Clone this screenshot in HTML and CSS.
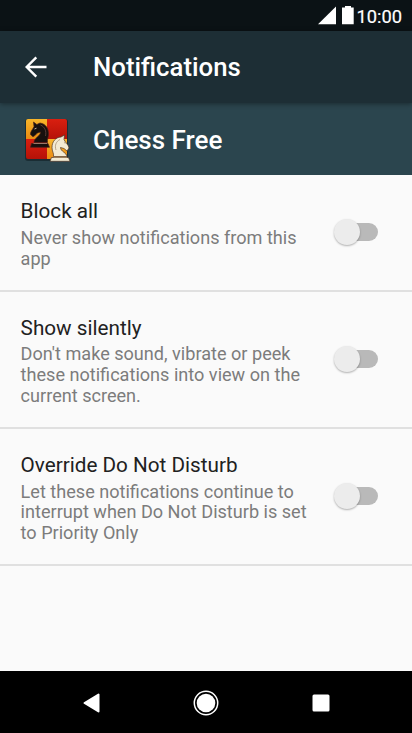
FILE: index.html
```html
<!DOCTYPE html>
<html lang="en">
<head>
    <meta charset="UTF-8">
    <meta name="viewport" content="width=device-width, initial-scale=1.0">
    <title>Notifications</title>
    <link rel="stylesheet" href="styles.css">
</head>
<body>
    <div class="status-bar">
        <svg class="status-icons" width="36" height="20" viewBox="0 0 36 20">
            <path d="M0 18.3 18 0.6V18.3z" fill="#fff"/>
            <path d="M24 1.6h3V0h6v1.6h2.7v16.7H24z" fill="#fff"/>
        </svg>
        <span class="clock">10:00</span>
    </div>

    <header class="toolbar">
        <svg class="back" width="22" height="22" viewBox="0 0 22 22">
            <path d="M21.5 11H2M11.3 1.4 1.7 11l9.6 9.6" fill="none" stroke="#fff" stroke-width="2.4"/>
        </svg>
        <h1>Notifications</h1>
    </header>

    <div class="app-header">
        <svg class="app-icon" width="50" height="50" viewBox="0 0 50 50">
            <defs>
                <linearGradient id="red" x1="0" y1="0" x2="0" y2="1">
                    <stop offset="0" stop-color="#d91f10"/>
                    <stop offset="1" stop-color="#b51208"/>
                </linearGradient>
                <linearGradient id="gold" x1="0" y1="0" x2="0" y2="1">
                    <stop offset="0" stop-color="#f8b52a"/>
                    <stop offset="1" stop-color="#eb8b12"/>
                </linearGradient>
                <clipPath id="board"><rect x="4" y="5" width="41" height="40" rx="2"/></clipPath>
            </defs>
            <rect x="3" y="5" width="43" height="42" rx="3" fill="#14242a" opacity=".7"/>
            <g clip-path="url(#board)">
                <rect x="4" y="5" width="21" height="20" fill="url(#gold)"/>
                <rect x="25" y="5" width="20" height="20" fill="url(#red)"/>
                <rect x="4" y="25" width="21" height="20" fill="url(#red)"/>
                <rect x="25" y="25" width="20" height="20" fill="url(#gold)"/>
            </g>
            <!-- black knight -->
            <path d="M9.500 29.500H26l1.500 3.800H8.500zM12 28.500c0-5 6.500-6 6.500-10.500-2 .5-4 1-5 3L11 22.800 8.500 20.500c0-3.500 2-4.500 3.500-8L11.500 8l3.300 2.500L18 9c6 1 8.500 5.500 8.500 11 0 3.500-1.500 5-1 8.500z" fill="#17100e" stroke="#4b211b" stroke-width=".7"/>
            <path d="M18.500 11c4.500 2 6 6 5 11" fill="none" stroke="#5d4039" stroke-width=".9"/>
            <path d="M12.500 15l2-.8" stroke="#c9b3a8" stroke-width="1"/>
            <path d="M11.500 29.500H25" stroke="#9b7766" stroke-width="1"/>
            <!-- white knight -->
            <path d="M29.500 43.500h17l1.500 3.800H28zM31.500 42.500c.5-3.500-1.500-5-1.500-9 0-6 3.500-10 9-10.500l3.500-2-.5 4.500c1.500 3.500 4.500 5 5 8.500L45 37l-3-2.500-3.500-1c0 4 6 5 6.500 9z" fill="#f3ead2" stroke="#4a3325" stroke-width=".7"/>
            <path d="M38 25.500c-4 2-5.500 6-4 10.500M42 28.500l1.500.8M31.500 43.300h13.500" fill="none" stroke="#a89072" stroke-width=".8"/>
        </svg>
        <h2>Chess Free</h2>
    </div>

    <main class="settings">
        <div class="setting">
            <div class="setting-text">
                <div class="title">Block all</div>
                <div class="summary">Never show notifications from this<br>app</div>
            </div>
            <div class="switch"><span class="thumb"></span></div>
        </div>
        <div class="setting">
            <div class="setting-text">
                <div class="title">Show silently</div>
                <div class="summary">Don't make sound, vibrate or peek<br>these notifications into view on the<br>current screen.</div>
            </div>
            <div class="switch"><span class="thumb"></span></div>
        </div>
        <div class="setting">
            <div class="setting-text">
                <div class="title">Override Do Not Disturb</div>
                <div class="summary">Let these notifications continue to<br>interrupt when Do Not Disturb is set<br>to Priority Only</div>
            </div>
            <div class="switch"><span class="thumb"></span></div>
        </div>
    </main>

    <nav class="nav-bar">
        <svg width="18" height="20" viewBox="0 0 18 20">
            <path d="M15.5 1.6v16.8L1.5 10z" fill="#fff" stroke="#fff" stroke-width="2" stroke-linejoin="round"/>
        </svg>
        <svg width="26" height="26" viewBox="0 0 26 26">
            <circle cx="13" cy="13" r="11.7" fill="none" stroke="#fff" stroke-width="1.5"/>
            <circle cx="13" cy="13" r="9.3" fill="#fff"/>
        </svg>
        <svg width="18" height="18" viewBox="0 0 18 18">
            <rect x=".5" y=".5" width="17" height="17" rx="1.5" fill="#fff"/>
        </svg>
    </nav>
</body>
</html>
```

FILE: styles.css
```css
* {
    box-sizing: border-box;
}
body {
    margin: 0;
    height: 733px;
    display: flex;
    flex-direction: column;
    overflow: hidden;
    font-family: Roboto, sans-serif;
    background-color: #fafafa;
}
h1, h2 {
    margin: 0;
    font-size: 25.75px;
    font-weight: 500;
    line-height: 30px;
    color: #fff;
}
h2 {
    font-size: 26px;
    padding-top: 1px;
}
.status-bar {
    height: 31px;
    flex: none;
    display: flex;
    align-items: center;
    justify-content: flex-end;
    padding-right: 10px;
    background-color: #0b1215;
}
.status-icons {
    margin-right: 2px;
}
.clock {
    font-size: 18.3px;
    font-weight: 400;
    line-height: 21px;
    color: #fff;
    -webkit-text-stroke: 0.2px #fff;
    padding-top: 1px;
}
.toolbar {
    height: 72px;
    flex: none;
    display: flex;
    align-items: center;
    padding: 0 0 1px 25px;
    background-color: #1d2e35;
    box-shadow: 0 1px 5px rgba(0, 0, 0, 0.4);
    z-index: 1;
}
.back {
    margin-right: 46px;
}
.app-header {
    height: 72px;
    flex: none;
    display: flex;
    align-items: center;
    padding-left: 22px;
    background-color: #2b454e;
}
.app-icon {
    margin-right: 21px;
}
.settings {
    flex: 1;
}
.setting {
    display: flex;
    align-items: center;
    justify-content: space-between;
    height: 116.5px;
    padding: 0 34px 0 20.6px;
    border-bottom: 2px solid #e0e0e0;
}
.setting + .setting {
    height: 137.3px;
}
.setting-text {
    padding-top: 4px;
}
.title {
    font-size: 20.7px;
    line-height: 25px;
    color: #212121;
}
.summary {
    font-size: 18.1px;
    line-height: 20.7px;
    color: #7c7c7c;
    margin-top: 3.5px;
    white-space: nowrap;
}
.switch {
    width: 40px;
    height: 18px;
    flex: none;
    display: flex;
    align-items: center;
    border-radius: 9px;
    background-color: #b9b9b9;
}
.thumb {
    width: 26px;
    height: 26px;
    margin-left: -4px;
    border-radius: 50%;
    background-color: #ececec;
    box-shadow: 0 1px 2px rgba(0, 0, 0, 0.3);
}
.nav-bar {
    height: 62px;
    flex: none;
    display: flex;
    align-items: center;
    gap: 91.5px;
    padding: 1px 0 0 83px;
    background-color: #000;
}
.nav-bar svg:last-child {
    margin-left: 1.5px;
}
```
